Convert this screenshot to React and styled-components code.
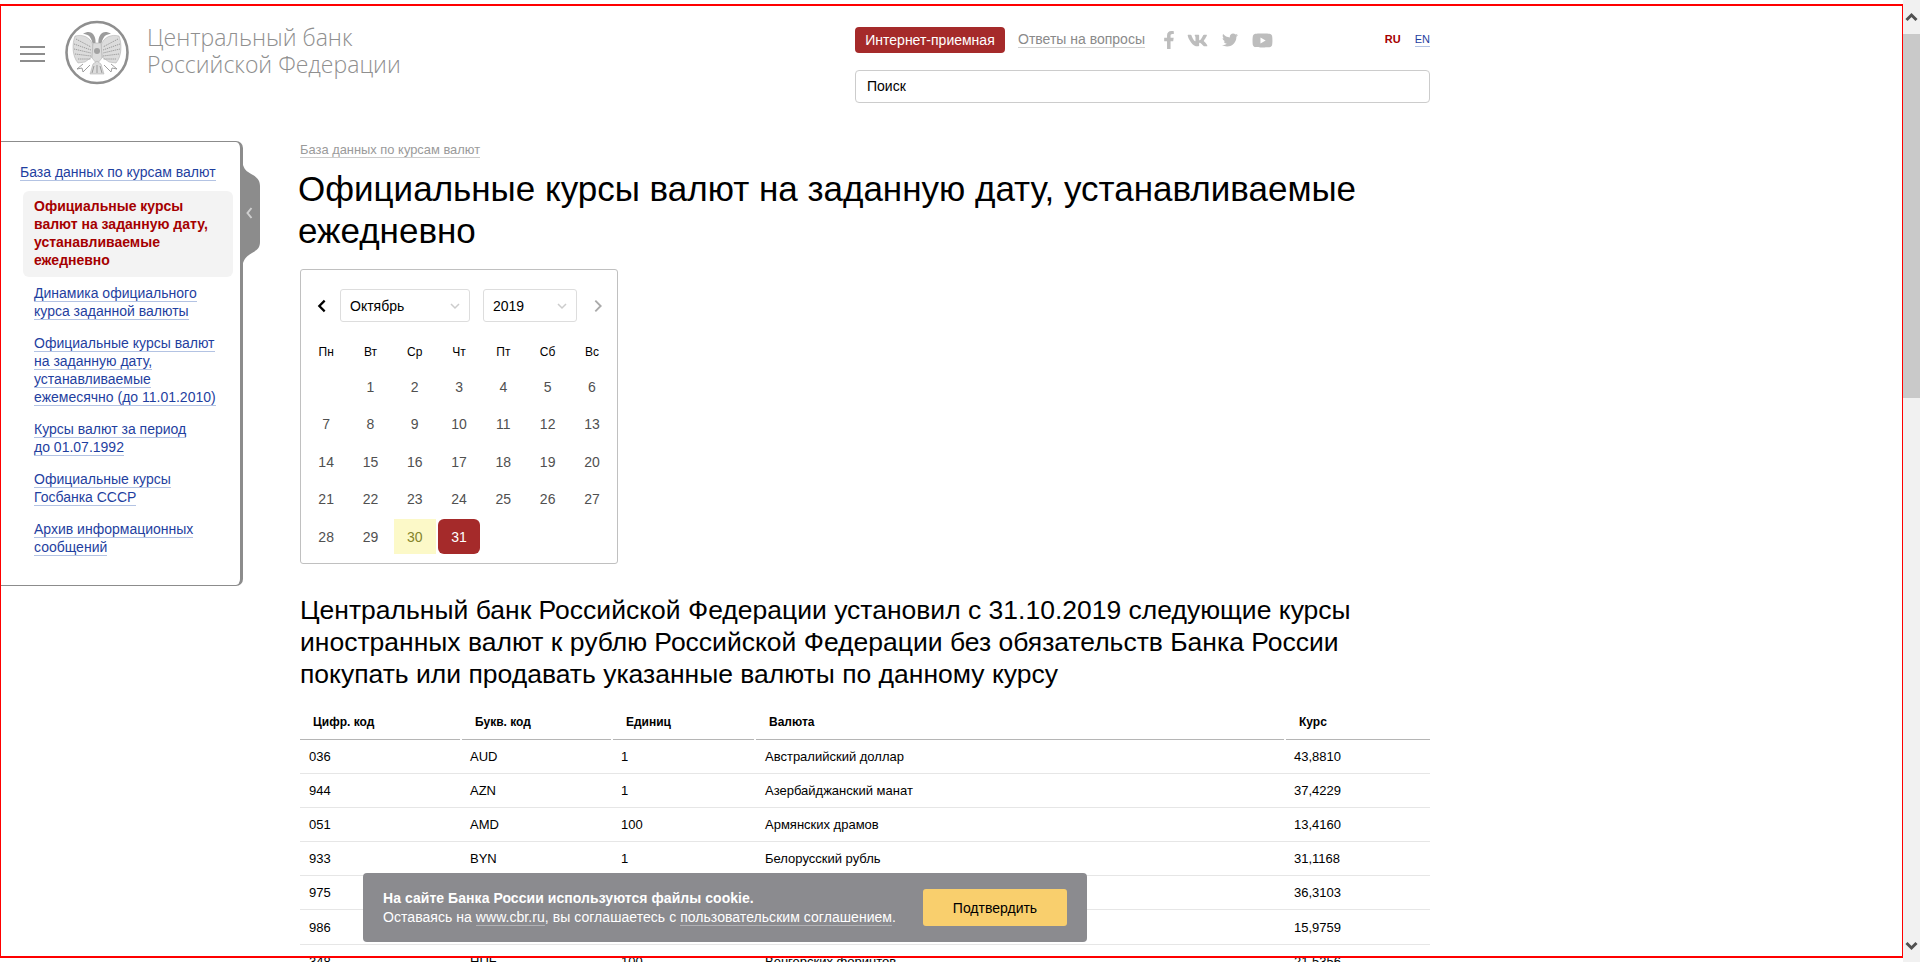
import React from 'react';
import styled, { createGlobalStyle } from 'styled-components';
import { FaFacebookF, FaVk, FaTwitter, FaYoutube } from 'react-icons/fa';

const GlobalStyle = createGlobalStyle`
  html, body {
    margin: 0;
    padding: 0;
    height: 962px;
    overflow: hidden;
    background: #fff;
  }
  body {
    font-family: "Liberation Sans", Arial, sans-serif;
    color: #000;
  }
  * { box-sizing: border-box; }
`;

const sideLinks = [
  ['Динамика официального', 'курса заданной валюты'],
  ['Официальные курсы валют', 'на заданную дату,', 'устанавливаемые', 'ежемесячно (до 11.01.2010)'],
  ['Курсы валют за период', 'до 01.07.1992'],
  ['Официальные курсы', 'Госбанка СССР'],
  ['Архив информационных', 'сообщений'],
];

const weekDays = ['Пн', 'Вт', 'Ср', 'Чт', 'Пт', 'Сб', 'Вс'];
const days = [null, ...Array.from({ length: 31 }, (_, i) => i + 1)];

const rates = [
  ['036', 'AUD', '1', 'Австралийский доллар', '43,8810'],
  ['944', 'AZN', '1', 'Азербайджанский манат', '37,4229'],
  ['051', 'AMD', '100', 'Армянских драмов', '13,4160'],
  ['933', 'BYN', '1', 'Белорусский рубль', '31,1168'],
  ['975', 'BGN', '1', 'Болгарский лев', '36,3103'],
  ['986', 'BRL', '1', 'Бразильский реал', '15,9759'],
  ['348', 'HUF', '100', 'Венгерских форинтов', '21,5356'],
];

const Chevron = ({ dir = 'down', size = 12, color = '#ccc', width = 1.5 }) => {
  const d = {
    down: 'M2 4l4 4 4-4',
    up: 'M2 8l4-4 4 4',
    left: 'M8 2L4 6l4 4',
    right: 'M4 2l4 4-4 4',
  }[dir];
  return (
    <svg width={size} height={size} viewBox="0 0 12 12" fill="none">
      <path d={d} stroke={color} strokeWidth={width} />
    </svg>
  );
};

const Emblem = () => (
  <svg width="65" height="65" viewBox="0 0 65 65">
    <circle cx="32" cy="32.5" r="30.5" fill="none" stroke="#8f8f8f" strokeWidth="2.6" />
    <g fill="#dcdcdc" stroke="#a6a6a6" strokeWidth="0.5">
      <path d="M28 25 C25 17 18 14 10 16 C7 24 7 36 13 43 L20 42 L27 37Z" />
      <path d="M36 25 C39 17 46 14 54 16 C57 24 57 36 51 43 L44 42 L37 37Z" />
      <path d="M28 23 L36 23 L37 38 L32 44 L27 38Z" />
      <path d="M28 44 L32 41 L36 44 L39 54 L25 54Z" />
    </g>
    <g fill="none" stroke="#949494" strokeWidth="0.9">
      <path d="M11 19l15 8M9 24l17 6M9 29l17 4M10 34l16 2M13 39l13 0" strokeDasharray="1.3 0.8" />
      <path d="M53 19l-15 8M55 24l-17 6M55 29l-17 4M54 34l-16 2M51 39l-13 0" strokeDasharray="1.3 0.8" />
      <path d="M29 46l-2 7M32 45v8M35 46l2 7" />
      <path d="M18 44l-6 5 5-1 1 4 7-7M46 44l6 5-5-1-1 4-7-7" />
    </g>
    <g fill="#9c9c9c">
      <path d="M30.5 23 C31 18 29 14 26 12.5 C24 11.5 21 12 18 13.5 L22.5 15 C25 16 26.5 19 27.5 23Z" />
      <path d="M33.5 23 C33 18 35 14 38 12.5 C40 11.5 43 12 46 13.5 L41.5 15 C39 16 37.5 19 36.5 23Z" />
      <circle cx="32" cy="31" r="3" fill="#a2a2a2" />
    </g>
  </svg>
);

const App = () => (
  <>
    <GlobalStyle />
    <Page>
      <Header>
        <LogoSide>
          <Burger>
            <span />
            <span />
            <span />
          </Burger>
          <Emblem />
          <LogoText>
            Центральный банк
            <br />
            Российской Федерации
          </LogoText>
        </LogoSide>
        <HeaderTools>
          <ToolRow>
            <ReceptionButton>Интернет-приемная</ReceptionButton>
            <FaqLink>Ответы на вопросы</FaqLink>
            <Socials>
              <FacebookIcon size={18} />
              <FaVk size={21} />
              <FaTwitter size={16} />
              <FaYoutube size={21} />
            </Socials>
            <Langs>
              <LangLink $active>RU</LangLink>
              <LangLink>EN</LangLink>
            </Langs>
          </ToolRow>
          <SearchBox>Поиск</SearchBox>
        </HeaderTools>
      </Header>

      <Columns>
        <SideMenu>
          <SideTab>
            <svg width="17" height="98" viewBox="0 0 17 98">
              <path d="M0 0 C2 6 5 7 10 10 C15 13 17 16 17 21 V77 C17 83 14 85 9 88 C4 91 2 93 0 98 Z" fill="#8c8c8c" />
              <path d="M8.5 43 L4.5 48 L8.5 53" fill="none" stroke="#cfcfcf" strokeWidth="2" />
            </svg>
          </SideTab>
          <SideTop>
            <Underlined>База данных по курсам валют</Underlined>
          </SideTop>
          <ActiveItem>
            Официальные курсы
            <br />
            валют на заданную дату,
            <br />
            устанавливаемые
            <br />
            ежедневно
          </ActiveItem>
          {sideLinks.map((lines) => (
            <SideItem key={lines[0]}>
              {lines.map((line) => (
                <SideLine key={line}>
                  <Underlined>{line}</Underlined>
                </SideLine>
              ))}
            </SideItem>
          ))}
        </SideMenu>

        <Content>
          <Breadcrumb>База данных по курсам валют</Breadcrumb>
          <Title>Официальные курсы валют на заданную дату, устанавливаемые ежедневно</Title>

          <Calendar>
            <CalendarHead>
              <ArrowButton>
                <Chevron dir="left" size={16} color="#000" width={1.7} />
              </ArrowButton>
              <Select $width={130}>
                Октябрь
                <Chevron />
              </Select>
              <Select $width={94}>
                2019
                <Chevron />
              </Select>
              <ArrowButton>
                <Chevron dir="right" size={16} color="#aaa" width={1.4} />
              </ArrowButton>
            </CalendarHead>
            <WeekRow>
              {weekDays.map((d) => (
                <WeekDay key={d}>{d}</WeekDay>
              ))}
            </WeekRow>
            <DaysGrid>
              {days.map((d, i) => (
                <Day key={i} $kind={d === 30 ? 'today' : d === 31 ? 'selected' : undefined}>
                  {d}
                </Day>
              ))}
            </DaysGrid>
          </Calendar>

          <Lead>
            Центральный банк Российской Федерации установил с 31.10.2019 следующие курсы иностранных валют к рублю
            Российской Федерации без обязательств Банка России покупать или продавать указанные валюты по данному курсу
          </Lead>

          <RatesTable>
            <colgroup>
              <col style={{ width: 161 }} />
              <col style={{ width: 151 }} />
              <col style={{ width: 143 }} />
              <col style={{ width: 530 }} />
              <col style={{ width: 145 }} />
            </colgroup>
            <thead>
              <tr>
                <th>Цифр. код</th>
                <th>Букв. код</th>
                <th>Единиц</th>
                <th>Валюта</th>
                <th>Курс</th>
              </tr>
            </thead>
            <tbody>
              {rates.map((row) => (
                <tr key={row[0]}>
                  {row.map((cell) => (
                    <td key={cell}>{cell}</td>
                  ))}
                </tr>
              ))}
            </tbody>
          </RatesTable>
        </Content>
      </Columns>
    </Page>

    <CookieBar>
      <CookieText>
        <strong>На сайте Банка России используются файлы cookie.</strong>
        <span>
          Оставаясь на <CookieLink>www.cbr.ru</CookieLink>, вы соглашаетесь с{' '}
          <CookieLink>пользовательским соглашением</CookieLink>.
        </span>
      </CookieText>
      <ConfirmButton>Подтвердить</ConfirmButton>
    </CookieBar>

    <Frame />

    <Scrollbar>
      <ScrollButton>
        <Chevron dir="up" size={15} color="#505050" width={2.4} />
      </ScrollButton>
      <ScrollThumb />
      <ScrollSpacer />
      <ScrollButton>
        <Chevron dir="down" size={15} color="#505050" width={2.4} />
      </ScrollButton>
    </Scrollbar>
  </>
);

export default App;

const Page = styled.div`
  width: 1903px;
  height: 962px;
  overflow: hidden;
`;

const Header = styled.header`
  display: grid;
  grid-template-columns: 855px 575px;
  height: 141px;
`;

const LogoSide = styled.div`
  display: flex;
  align-items: flex-start;
  padding: 20px 0 0 20px;
`;

const Burger = styled.div`
  display: flex;
  flex-direction: column;
  gap: 5px;
  width: 25px;
  margin: 26px 20px 0 0;

  span {
    display: block;
    height: 2px;
    background: #8c8c8c;
  }
`;

const LogoText = styled.div`
  margin: 4px 0 0 17px;
  font-family: "Open Sans", sans-serif;
  font-weight: 300;
  font-size: 23px;
  line-height: 27px;
  color: #8f8f8f;
  white-space: nowrap;
`;

const HeaderTools = styled.div`
  display: flex;
  flex-direction: column;
  padding-top: 27px;
`;

const ToolRow = styled.div`
  display: flex;
  align-items: center;
  height: 26px;
`;

const ReceptionButton = styled.div`
  display: flex;
  align-items: center;
  justify-content: center;
  width: 150px;
  height: 26px;
  padding-bottom: 1px;
  background: #a52a2a;
  border-radius: 4px;
  color: #fff;
  font-size: 14px;
`;

const FaqLink = styled.span`
  margin: -1px 0 0 13px;
  font-size: 14px;
  line-height: 16px;
  color: #8a8a8a;
  border-bottom: 1px solid #d0d0d0;
`;

const Socials = styled.div`
  display: flex;
  align-items: center;
  gap: 14px;
  margin-left: 15px;
  color: #bdbdbd;
`;

const FacebookIcon = styled(FaFacebookF)`
  margin-right: -5px;
`;

const Langs = styled.div`
  display: flex;
  gap: 14px;
  margin: -1px 0 0 auto;
`;

const LangLink = styled.span`
  font-size: 11px;
  line-height: 14px;
  font-weight: ${({ $active }) => ($active ? 700 : 400)};
  color: ${({ $active }) => ($active ? '#a50000' : '#1f3f9f')};
  border-bottom: 1px solid ${({ $active }) => ($active ? 'transparent' : '#b3c3e3')};
`;

const SearchBox = styled.div`
  display: flex;
  align-items: center;
  height: 33px;
  margin-top: 17px;
  padding: 0 0 2px 11px;
  border: 1px solid #ccc;
  border-radius: 4px;
  font-size: 14px;
`;

const Columns = styled.div`
  display: flex;
  align-items: flex-start;
`;

const SideMenu = styled.nav`
  position: relative;
  flex: none;
  width: 243px;
  height: 445px;
  padding: 21px 8px 0 20px;
  border: 1px solid #8c8c8c;
  border-left: 0;
  border-right-width: 3px;
  border-radius: 0 7px 7px 0;
  font-size: 14px;
  line-height: 18px;
  color: #1f3f9f;
`;

const SideTab = styled.div`
  position: absolute;
  top: 23px;
  left: 100%;
  margin-left: 3px;
  line-height: 0;
`;

const Underlined = styled.span`
  border-bottom: 1px solid #b3c3e3;
`;

const SideTop = styled.div`
  margin-bottom: 10px;
`;

const ActiveItem = styled.div`
  width: 210px;
  margin: 0 0 7px 3px;
  padding: 6px 11px 8px;
  background: #f3f3f3;
  border-radius: 6px;
  color: #a50000;
  font-weight: 700;
  white-space: nowrap;
`;

const SideItem = styled.div`
  margin: 0 0 14px 14px;
`;

const SideLine = styled.div`
  white-space: nowrap;
`;

const Content = styled.main`
  width: 1130px;
  margin-left: 57px;
`;

const Breadcrumb = styled.div`
  width: fit-content;
  margin-top: 2px;
  font-size: 12.9px;
  line-height: 14px;
  color: #9a9a9a;
  border-bottom: 1px solid #ccc;
`;

const Title = styled.h1`
  margin: 10px 0 0 -2px;
  width: 1110px;
  font-size: 35px;
  line-height: 42px;
  font-weight: 400;
`;

const Calendar = styled.section`
  width: 318px;
  height: 295px;
  margin-top: 17px;
  padding: 19px 3px 0 4px;
  border: 1px solid #c0c0c0;
  border-radius: 3px;
`;

const CalendarHead = styled.div`
  display: flex;
  align-items: center;
  gap: 13px;
  padding-left: 9px;
`;

const ArrowButton = styled.div`
  display: flex;
  width: 16px;
  margin-right: -3px;
`;

const Select = styled.div`
  display: flex;
  align-items: center;
  justify-content: space-between;
  width: ${({ $width }) => $width}px;
  height: 33px;
  padding: 0 8px 0 9px;
  border: 1px solid #ddd;
  border-radius: 3px;
  font-size: 14px;
`;

const WeekRow = styled.div`
  display: grid;
  grid-template-columns: repeat(7, 42.3px);
  column-gap: 2px;
  margin-top: 22px;
`;

const WeekDay = styled.div`
  text-align: center;
  font-size: 12px;
  line-height: 16px;
`;

const DaysGrid = styled.div`
  display: grid;
  grid-template-columns: repeat(7, 42.3px);
  grid-auto-rows: 35px;
  gap: 2.5px 2px;
  margin-top: 9px;
`;

const Day = styled.div`
  display: flex;
  align-items: center;
  justify-content: center;
  font-size: 14px;
  color: ${({ $kind }) => ($kind === 'today' ? '#85852a' : $kind === 'selected' ? '#fff' : '#505050')};
  background: ${({ $kind }) => ($kind === 'today' ? '#fcf9c8' : $kind === 'selected' ? '#a52a2a' : 'transparent')};
  border-radius: ${({ $kind }) => ($kind === 'selected' ? '6px' : '0')};
`;

const Lead = styled.h2`
  width: 1100px;
  margin: 30px 0 0;
  font-size: 26.5px;
  line-height: 32px;
  font-weight: 400;
`;

const RatesTable = styled.table`
  width: 1130px;
  margin-top: 16px;
  border-collapse: collapse;
  table-layout: fixed;

  th {
    height: 33px;
    padding: 0 0 0 13px;
    text-align: left;
    font-size: 12px;
    font-weight: 700;
    border-bottom: 1px solid #b5b5b5;
    border-left: 2px solid #fff;
  }
  th:first-child {
    border-left: 0;
  }
  td {
    height: 34.2px;
    padding: 0 0 0 9px;
    font-size: 13px;
    border-bottom: 1px solid #e6e6e6;
  }
  td:nth-child(4) {
    padding-left: 10px;
  }
`;

const CookieBar = styled.div`
  position: fixed;
  left: 363px;
  top: 873px;
  display: flex;
  align-items: center;
  justify-content: space-between;
  width: 724px;
  height: 69px;
  padding: 0 20px;
  background: #8b8b8f;
  border-radius: 4px;
  color: #fff;
`;

const CookieText = styled.div`
  display: flex;
  flex-direction: column;
  gap: 3px;
  font-size: 14px;
  line-height: 16px;
  letter-spacing: 0.05px;
`;

const CookieLink = styled.span`
  border-bottom: 1px solid #b0b0b4;
`;

const ConfirmButton = styled.div`
  display: flex;
  align-items: center;
  justify-content: center;
  width: 144px;
  height: 37px;
  background: #f9cf6d;
  border-radius: 3px;
  color: #000;
  font-size: 14px;
`;

const Frame = styled.div`
  position: fixed;
  left: 0;
  top: 4px;
  width: 1904px;
  height: 954px;
  border: 2px solid #f00;
  border-left-width: 1px;
  pointer-events: none;
`;

const Scrollbar = styled.div`
  position: fixed;
  top: 0;
  right: 0;
  display: flex;
  flex-direction: column;
  width: 17px;
  height: 962px;
  background: #f1f1f1;
`;

const ScrollButton = styled.div`
  display: flex;
  align-items: center;
  justify-content: center;
  height: 34px;
`;

const ScrollThumb = styled.div`
  height: 364px;
  background: #c9c9c9;
`;

const ScrollSpacer = styled.div`
  flex: 1;
`;
